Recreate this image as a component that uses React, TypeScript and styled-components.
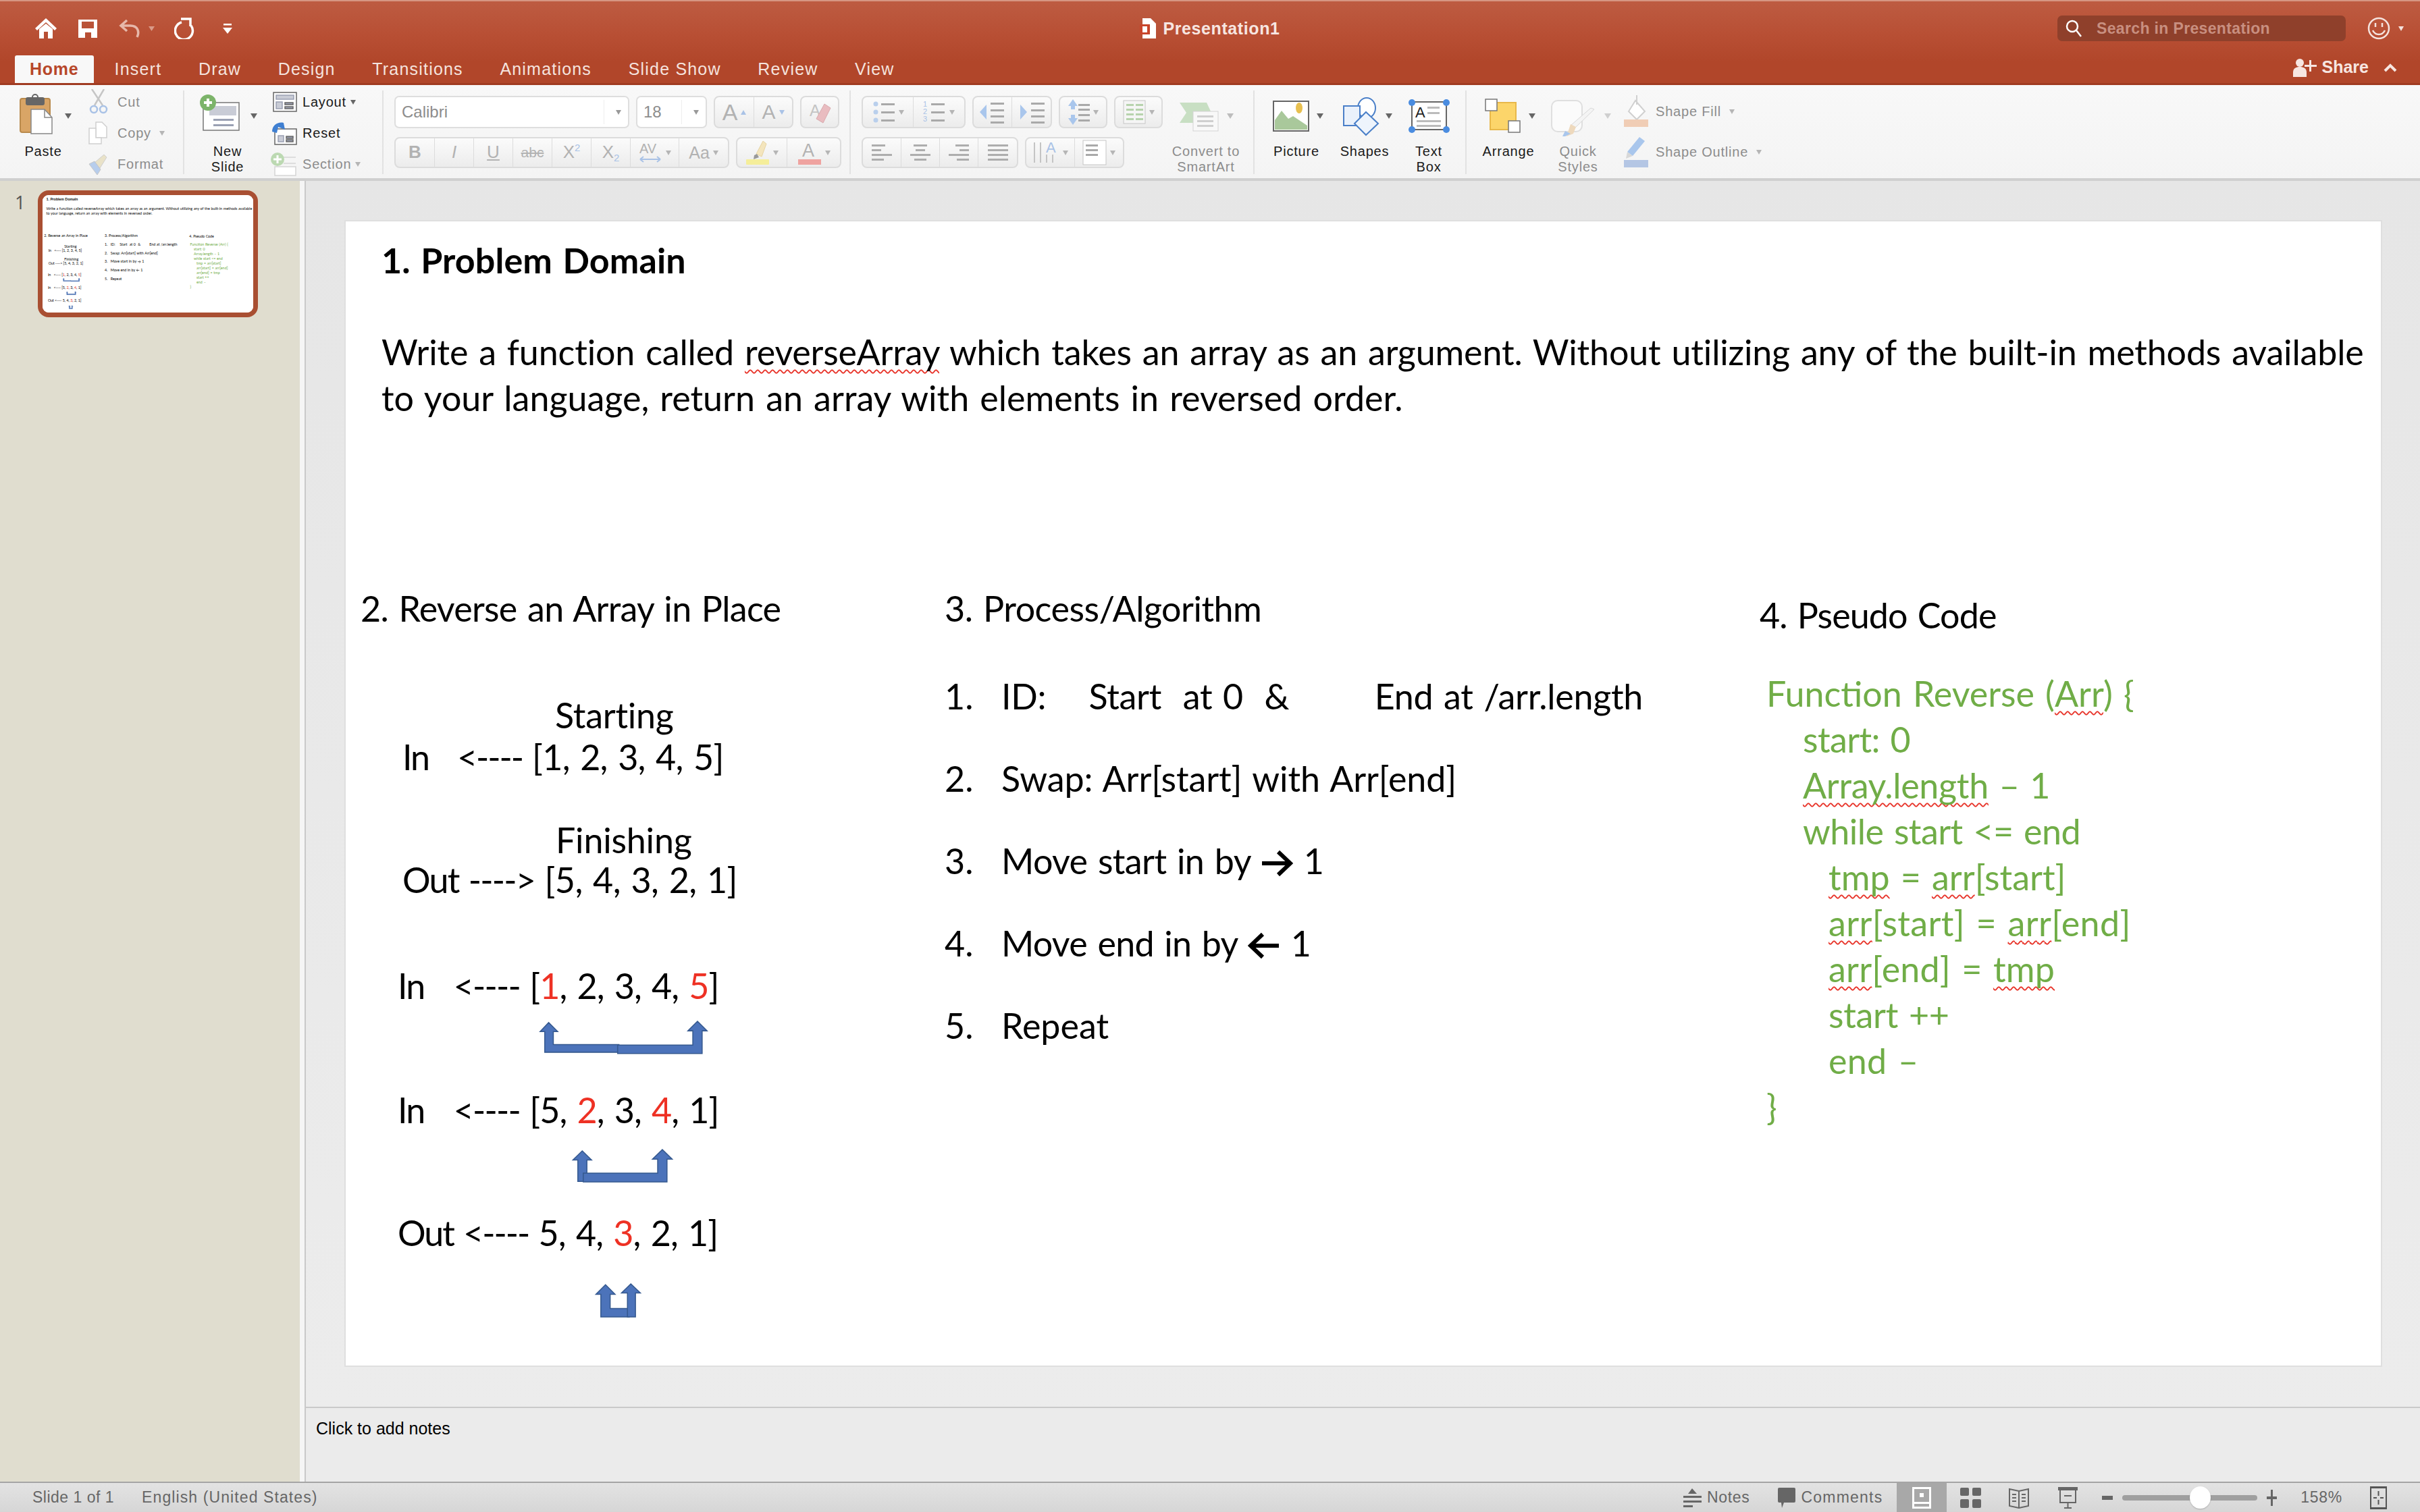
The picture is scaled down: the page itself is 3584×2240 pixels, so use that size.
import React from 'react';
import styled, { createGlobalStyle } from 'styled-components';

const UI = `"Liberation Sans", Arial, sans-serif`;

const Global = createGlobalStyle`
  html, body { margin: 0; padding: 0; background: #ebebeb; }
  * { box-sizing: border-box; }
`;

const Page = styled.div`
  width: 3584px;
  height: 2240px;
  display: flex;
  flex-direction: column;
  overflow: hidden;
  font-family: ${UI};
`;

/* ---------- title bar ---------- */

const TitleBar = styled.header`
  height: 126px;
  flex-shrink: 0;
  background: linear-gradient(#bd5b41 2px, #b84f34 50px, #b1462a 90px, #b1462a);
  border-top: 2px solid #d69683;
  border-bottom: 3px solid #a03b21;
`;

const TopRow = styled.div`
  height: 80px;
  display: grid;
  grid-template-columns: 1fr auto 1fr;
  align-items: center;
`;

const QuickAccess = styled.div`
  display: flex;
  align-items: center;
  padding-left: 52px;
  gap: 32px;
`;

const DocTitle = styled.div`
  display: flex;
  align-items: center;
  gap: 10px;
  color: #f7e6e1;
  font-size: 25px;
  font-weight: 700;
  letter-spacing: 0.6px;
`;

const TopRight = styled.div`
  display: flex;
  align-items: center;
  justify-content: flex-end;
  padding-right: 24px;
`;

const SearchBox = styled.div`
  width: 427px;
  height: 38px;
  border-radius: 7px;
  background: #8f402b;
  display: flex;
  align-items: center;
  padding-left: 12px;
  gap: 22px;
  color: #c88f80;
  font-size: 23px;
  font-weight: 700;
  letter-spacing: 0.35px;
  margin-right: 32px;
`;

const TabRow = styled.div`
  height: 41px;
  display: flex;
  align-items: stretch;
`;

const Tab = styled.div<{ $active?: boolean }>`
  display: flex;
  align-items: center;
  padding: 0 27.3px;
  font-size: 25px;
  letter-spacing: 1.2px;
  color: #f5e3de;
  ${(p) =>
    p.$active &&
    `
    margin: 0 3px 0 22px;
    padding: 0 23px 0 22px;
    background: #f8f8f8;
    color: #b7472a;
    font-weight: 700;
    letter-spacing: 0.7px;
    border-radius: 3px 3px 0 0;
  `}
`;

const ShareArea = styled.div`
  margin-left: auto;
  display: flex;
  align-items: center;
  gap: 8px;
  padding: 0 34px 6px 0;
  color: #f7e6e1;
  font-size: 25px;
  font-weight: 700;
`;

/* ---------- ribbon ---------- */

const Ribbon = styled.section`
  height: 142px;
  flex-shrink: 0;
  display: flex;
  background: linear-gradient(#f8f8f8, #f4f4f4);
  border-bottom: 4px solid #cfcfcf;
`;

const Group = styled.div<{ $w?: number; $pad: number }>`
  width: ${(p) => (p.$w ? `${p.$w}px` : 'auto')};
  flex-shrink: 0;
  display: flex;
  align-items: flex-start;
  padding-left: ${(p) => p.$pad}px;
`;

const Sep = styled.div`
  width: 2px;
  height: 124px;
  margin-top: 8px;
  flex-shrink: 0;
  background: #e2e2e2;
`;

const BigCol = styled.div<{ $w: number; $ml?: number; $off?: boolean }>`
  width: ${(p) => p.$w}px;
  margin-left: ${(p) => p.$ml ?? 0}px;
  flex-shrink: 0;
  padding-top: 12px;
  display: flex;
  flex-direction: column;
  font-size: 20px;
  letter-spacing: 0.8px;
  color: ${(p) => (p.$off ? '#8c8c8c' : '#1a1a1a')};
`;

const BigLabel = styled.div`
  margin-top: 11px;
  line-height: 23px;
  text-align: center;
  white-space: nowrap;
`;

const SmallList = styled.div<{ $ml: number; $top?: number }>`
  margin-left: ${(p) => p.$ml}px;
  display: flex;
  flex-direction: column;
  padding-top: ${(p) => p.$top ?? 2}px;
  flex-shrink: 0;
`;

const SmallRow = styled.div<{ $h: number; $gap: number; $off?: boolean }>`
  height: ${(p) => p.$h}px;
  display: flex;
  align-items: center;
  gap: ${(p) => p.$gap}px;
  font-size: 20px;
  letter-spacing: 0.8px;
  white-space: nowrap;
  color: ${(p) => (p.$off ? '#8c8c8c' : '#1a1a1a')};
`;

const Caret = styled.span<{ $c?: string; $ml?: number; $up?: boolean }>`
  display: inline-block;
  width: 0;
  height: 0;
  margin-left: ${(p) => p.$ml ?? 0}px;
  border-left: 4px solid transparent;
  border-right: 4px solid transparent;
  border-top: 7px solid ${(p) => p.$c ?? '#b5b5b5'};
  transform: ${(p) => (p.$up ? 'rotate(180deg)' : 'none')};
  flex-shrink: 0;
`;

const Stack = styled.div`
  padding-top: 16px;
  display: flex;
  flex-direction: column;
  gap: 13px;
`;

const ToolRow = styled.div<{ $h: number }>`
  height: ${(p) => p.$h}px;
  display: flex;
  gap: 10px;
`;

const SelectBox = styled.div<{ $w: number }>`
  width: ${(p) => p.$w}px;
  background: #fff;
  border: 2px solid #dedede;
  border-radius: 7px;
  display: flex;
  align-items: center;
  padding: 0 10px 0 9px;
  font-size: 24px;
  color: #8d8d8d;
`;

const SelectArrow = styled.div`
  margin-left: auto;
  height: 36px;
  width: 26px;
  border-left: 1px solid #eee;
  display: flex;
  align-items: center;
  justify-content: flex-end;
`;

const BtnGroup = styled.div`
  display: flex;
  background: linear-gradient(#fbfbfb, #ececec);
  border: 2px solid #dcdcdc;
  border-radius: 8px;
  overflow: hidden;
`;

const Cell = styled.div<{ $w: number }>`
  width: ${(p) => p.$w}px;
  display: flex;
  align-items: center;
  justify-content: center;
  gap: 5px;
  border-right: 1px solid #dcdcdc;
  &:last-child { border-right: 0; }
`;

const Glyph = styled.span<{ $size?: number; $bold?: boolean; $italic?: boolean; $deco?: string }>`
  font-size: ${(p) => p.$size ?? 26}px;
  font-weight: ${(p) => (p.$bold ? 700 : 400)};
  font-style: ${(p) => (p.$italic ? 'italic' : 'normal')};
  text-decoration: ${(p) => p.$deco ?? 'none'};
  color: #b2b2b2;
  line-height: 1.2;
`;

const SubMark = styled.span<{ $up?: boolean }>`
  font-size: 15px;
  color: #a9c2e6;
  vertical-align: ${(p) => (p.$up ? '10px' : '-5px')};
`;

/* ---------- work area ---------- */

const Work = styled.main`
  flex: 1;
  min-height: 0;
  display: flex;
`;

const Sidebar = styled.aside`
  width: 444px;
  flex-shrink: 0;
  background: #e0ddcf;
  display: flex;
  align-items: flex-start;
  padding: 14px 0 0 22px;
`;

const SlideNo = styled.div`
  width: 34px;
  font-family: "Open Sans", sans-serif;
  font-size: 27px;
  line-height: 36px;
  color: #555;
`;

const Thumb = styled.div`
  width: 326px;
  height: 188px;
  border: 7px solid #a94f32;
  border-radius: 16px;
  background: #fff;
  overflow: hidden;
`;

const Splitter = styled.div`
  width: 9px;
  flex-shrink: 0;
  background: #f5f5f5;
  border-right: 2px solid #c9c9c9;
`;

const MainCol = styled.div`
  flex: 1;
  min-width: 0;
  display: flex;
  flex-direction: column;
`;

const Canvas = styled.div`
  flex: 1;
  min-height: 0;
  background: linear-gradient(#e6e6e6, #ececec);
  padding: 60px 0 0 59px;
`;

const Notes = styled.div`
  height: 111px;
  flex-shrink: 0;
  background: #ebebeb;
  border-top: 2px solid #c9c9c9;
  padding: 16px 0 0 15px;
  font-size: 25px;
  line-height: 28px;
  color: #000;
`;

/* ---------- slide ---------- */

const Spell = styled.span`
  text-decoration: underline wavy #e8352b 1.5px;
  text-underline-offset: 6px;
  text-decoration-skip-ink: none;
`;

const SlideFrame = styled.div`
  position: relative;
  width: 3014px;
  height: 1695px;
  background: #fff;
  box-shadow: 0 0 0 2px #dfdfdf;
  font-family: Lato, "Open Sans", sans-serif;
  font-size: 52px;
  line-height: 68px;
  word-spacing: 2.8px;
  color: #000;
`;

const ThumbScale = styled.div`
  width: 3014px;
  height: 1695px;
  transform: scale(0.1038);
  transform-origin: 0 0;
  ${Spell} { text-decoration: none; }
  ${SlideFrame} { box-shadow: none; }
`;

const TextBox = styled.div<{ $x: number; $y: number; $c?: string; $ls?: number }>`
  position: absolute;
  left: ${(p) => p.$x}px;
  top: ${(p) => p.$y}px;
  white-space: pre;
  color: ${(p) => p.$c ?? 'inherit'};
  letter-spacing: ${(p) => p.$ls ?? 0}px;
`;

const Line = styled.div<{ $n?: number; $ls?: number }>`
  padding-left: ${(p) => p.$n ?? 0}px;
  letter-spacing: ${(p) => p.$ls ?? 0}px;
`;

const Heading = styled(Line)`
  font-weight: 700;
`;

const Blank = styled.div`
  height: 68px;
`;

// digits run wider in Lato than in Calibri, so the array part gets its own tracking
const ArrayPart = styled.span<{ $ls: number }>`
  letter-spacing: ${(p) => p.$ls}px;
`;

const AlgoRow = styled.div<{ $ls?: number }>`
  display: flex;
  height: 68px;
  margin-bottom: 54px;
  letter-spacing: ${(p) => p.$ls ?? 0}px;
`;

const AlgoNo = styled.span`
  width: 84px;
  flex-shrink: 0;
  letter-spacing: 0;
`;

const Red = styled.span`
  color: #ee3124;
`;

const InlineArrow = styled.svg`
  display: inline-block;
  vertical-align: -4px;
  margin: 0 16px 0 14px;
`;

const Arrows = styled.svg`
  position: absolute;
  left: 48px;
  top: 1074px;
`;

/* ---------- status bar ---------- */

const StatusBar = styled.footer`
  height: 45px;
  flex-shrink: 0;
  display: flex;
  align-items: center;
  background: linear-gradient(#e3e3e3, #d6d6d6);
  border-top: 2px solid #a5a5a5;
  padding: 0 49px 0 48px;
  font-size: 23px;
  color: #666;
`;

const StatusText = styled.span<{ $ml?: number; $ls?: number }>`
  margin-left: ${(p) => p.$ml ?? 0}px;
  letter-spacing: ${(p) => p.$ls ?? 0.7}px;
  white-space: nowrap;
`;

const Push = styled.div`
  margin-left: auto;
`;

const ViewTile = styled.div`
  width: 74px;
  height: 43px;
  margin-left: 21px;
  background: #a8a8a8;
  display: flex;
  align-items: center;
  justify-content: center;
`;

const Icon = styled.svg<{ $ml?: number }>`
  display: block;
  flex-shrink: 0;
  margin-left: ${(p) => p.$ml ?? 0}px;
`;

const ZoomTrack = styled.div`
  position: relative;
  width: 200px;
  height: 8px;
  margin-left: 14px;
  border-radius: 4px;
  background: #9f9f9f;
`;

const ZoomThumb = styled.div`
  position: absolute;
  left: 100px;
  top: -13px;
  width: 31px;
  height: 33px;
  border-radius: 50%;
  background: #fff;
  box-shadow: 0 1px 2px rgba(0, 0, 0, 0.2);
`;

/* ---------- icons ---------- */

const CaretMark = ({ x, y, c = '#666' }: { x: number; y: number; c?: string }) => (
  <polygon points={`${x},${y} ${x + 10},${y} ${x + 5},${y + 8}`} fill={c} />
);

const ParaLines = ({ x, ys, w, c = '#a9a9a9' }: { x: number; ys: number[]; w: number; c?: string }) => (
  <>
    {ys.map((y) => (
      <rect key={y} x={x} y={y} width={w} height={3} fill={c} />
    ))}
  </>
);

function SlideContent() {
  return (
    <SlideFrame>
      <TextBox $x={53} $y={23}>
        <Heading $ls={0.1}>1. Problem Domain</Heading>
        <Blank />
        <Line $ls={-0.16}>
          Write a function called <Spell>reverseArray</Spell> which takes an array as an argument. Without utilizing any of the built-in methods available
        </Line>
        <Line>to your language, return an array with elements in reversed order.</Line>
      </TextBox>

      <TextBox $x={22} $y={539} $ls={-0.7}>2. Reverse an Array in Place</TextBox>
      <TextBox $x={887} $y={539} $ls={-0.5}>3. Process/Algorithm</TextBox>
      <TextBox $x={2094} $y={549} $ls={-0.9}>4. Pseudo Code</TextBox>

      <TextBox $x={310} $y={697} $ls={-0.25}>Starting</TextBox>
      <TextBox $x={84} $y={759} $ls={-2.1}>
        {'In   <---- '}<ArrayPart $ls={-0.7}>[1, 2, 3, 4, 5]</ArrayPart>
      </TextBox>
      <TextBox $x={311} $y={882} $ls={-0.2}>Finishing</TextBox>
      <TextBox $x={84} $y={941} $ls={-1.8}>
        {'Out ----> '}<ArrayPart $ls={-0.6}>[5, 4, 3, 2, 1]</ArrayPart>
      </TextBox>

      <TextBox $x={77} $y={1098} $ls={-1.8}>
        {'In   <---- '}
        <ArrayPart $ls={-0.95}>[<Red>1</Red>{', 2, 3, 4, '}<Red>5</Red>]</ArrayPart>
      </TextBox>
      <TextBox $x={77} $y={1282} $ls={-1.8}>
        {'In   <---- '}
        <ArrayPart $ls={-0.95}>{'[5, '}<Red>2</Red>{', 3, '}<Red>4</Red>{', 1]'}</ArrayPart>
      </TextBox>
      <TextBox $x={77} $y={1464} $ls={-2}>
        {'Out <---- '}
        <ArrayPart $ls={-0.9}>{'5, 4, '}<Red>3</Red>{', 2, 1]'}</ArrayPart>
      </TextBox>

      <Arrows width={600} height={600} viewBox="0 0 1568 1568" fill="#4c73ba" stroke="#35598f" strokeWidth={4}>
        <polygon points="660,295 695,330 678,330 678,380 932,380 932,410 645,410 645,330 627,330" />
        <polygon points="1236,290 1273,327 1254,327 1254,415 927,415 927,382 1218,382 1218,327 1199,327" />
        <polygon points="790,792 826,827 808,827 808,910 773,910 773,827 754,827" />
        <polygon points="1100,787 1138,824 1118,824 1118,912 794,912 794,878 1082,878 1082,824 1062,824" />
        <polygon points="880,1310 917,1347 898,1347 898,1402 972,1402 972,1435 862,1435 862,1347 843,1347" />
        <polygon points="978,1307 1015,1342 996,1342 996,1435 965,1435 965,1342 942,1342" />
      </Arrows>

      <TextBox $x={887} $y={669}>
        <AlgoRow $ls={-0.3}><AlgoNo>1.</AlgoNo><span>{'ID:    Start  at 0  &        End at /arr.length'}</span></AlgoRow>
        <AlgoRow $ls={-0.1}><AlgoNo>2.</AlgoNo><span>Swap: Arr[start] with Arr[end]</span></AlgoRow>
        <AlgoRow $ls={-0.6}>
          <AlgoNo>3.</AlgoNo>
          <span>
            Move start in by
            <InlineArrow width={48} height={40} viewBox="0 0 48 40" fill="none" stroke="#000" strokeWidth={6}>
              <path d="M2 20H42M26 3L44 20L26 37" />
            </InlineArrow>
            1
          </span>
        </AlgoRow>
        <AlgoRow $ls={-0.7}>
          <AlgoNo>4.</AlgoNo>
          <span>
            Move end in by
            <InlineArrow width={48} height={40} viewBox="0 0 48 40" fill="none" stroke="#000" strokeWidth={6}>
              <path d="M46 20H6M22 3L4 20L22 37" />
            </InlineArrow>
            1
          </span>
        </AlgoRow>
        <AlgoRow><AlgoNo>5.</AlgoNo><span>Repeat</span></AlgoRow>
      </TextBox>

      <TextBox $x={2104} $y={665} $c="#70ad47">
        <Line>Function Reverse (<Spell>Arr</Spell>) {'{'}</Line>
        <Line $n={54} $ls={-0.6}>start: 0</Line>
        <Line $n={54} $ls={-0.3}><Spell>Array.length</Spell> – 1</Line>
        <Line $n={54} $ls={-0.55}>{'while start <= end'}</Line>
        <Line $n={92}><Spell>tmp</Spell> = <Spell>arr</Spell>[start]</Line>
        <Line $n={92} $ls={0.35}><Spell>arr</Spell>[start] = <Spell>arr</Spell>[end]</Line>
        <Line $n={92} $ls={0.2}><Spell>arr</Spell>[end] = <Spell>tmp</Spell></Line>
        <Line $n={92} $ls={-0.3}>start ++</Line>
        <Line $n={92} $ls={0.3}>end –</Line>
        <Line>{'}'}</Line>
      </TextBox>
    </SlideFrame>
  );
}

export default function App() {
  return (
    <Page>
      <Global />
      <TitleBar>
        <TopRow>
          <QuickAccess>
            <Icon width={32} height={30} viewBox="0 0 32 30" fill="#fff">
              <path d="M16 0L32 15L29 18L16 6L3 18L0 15Z" />
              <path d="M6 16L16 8L26 16V30H19V20H13V30H6Z" />
            </Icon>
            <Icon width={28} height={28} viewBox="0 0 28 28" fill="#fff">
              <path fillRule="evenodd" d="M0 1H28V28H0ZM5 4V14H23V4ZM10 20V28H19V20Z" />
            </Icon>
            <Icon width={54} height={30} viewBox="0 0 54 30" fill="none" stroke="#e6b8aa" strokeWidth={3.5}>
              <path d="M12 3L3 11L12 19M3 11H17C28 11 31 20 27 28" />
              <polygon points="44,12 53,12 48.5,19" fill="#d99a88" stroke="none" />
            </Icon>
            <Icon width={30} height={32} viewBox="0 0 30 32" fill="none" stroke="#fff" strokeWidth={3.5} $ml={-4}>
              <path d="M11 7A13 13 0 1 0 25 12" />
              <path d="M10 2H24V13" />
            </Icon>
            <Icon width={14} height={15} viewBox="0 0 14 15" fill="#fff" $ml={10}>
              <rect x={1} y={0} width={12} height={2.5} />
              <polygon points="0,6 14,6 7,15" />
            </Icon>
          </QuickAccess>
          <DocTitle>
            <Icon width={24} height={30} viewBox="0 0 24 30">
              <path d="M4 0H16L24 8V30H4Z" fill="#fff" />
              <rect x={0} y={9} width={15} height={15} fill="#c8452b" />
              <rect x={4} y={12} width={7} height={9} fill="#fff" />
            </Icon>
            Presentation1
          </DocTitle>
          <TopRight>
            <SearchBox>
              <Icon width={24} height={26} viewBox="0 0 24 26" fill="none" stroke="#fff" strokeWidth={2.5}>
                <circle cx={10} cy={10} r={8} />
                <path d="M16 16L23 25" />
              </Icon>
              Search in Presentation
            </SearchBox>
            <Icon width={34} height={34} viewBox="0 0 34 34" fill="none" stroke="#f5e3de" strokeWidth={2.5}>
              <circle cx={17} cy={17} r={15} />
              <path d="M8 20C12 28 22 28 26 20" />
              <path d="M12 9V15M22 9V15" />
            </Icon>
            <Caret $c="#f5e3de" $ml={12} />
          </TopRight>
        </TopRow>
        <TabRow>
          <Tab $active>Home</Tab>
          <Tab>Insert</Tab>
          <Tab>Draw</Tab>
          <Tab>Design</Tab>
          <Tab>Transitions</Tab>
          <Tab>Animations</Tab>
          <Tab>Slide Show</Tab>
          <Tab>Review</Tab>
          <Tab>View</Tab>
          <ShareArea>
            <Icon width={35} height={28} viewBox="0 0 35 28" fill="#f7e6e1">
              <circle cx={10} cy={7} r={6} />
              <path d="M0 28V21C0 15 5 13 10 13C15 13 20 15 20 21V28Z" />
              <path d="M24 3H27V10H35V13H27V20H24V13H17V10H24Z" />
            </Icon>
            Share
            <Icon width={20} height={14} viewBox="0 0 20 14" fill="none" stroke="#f7e6e1" strokeWidth={4} $ml={14}>
              <path d="M2 12L10 4L18 12" />
            </Icon>
          </ShareArea>
        </TabRow>
      </TitleBar>

      <Ribbon>
        <Group $w={271} $pad={20}>
          <BigCol $w={88}>
            <Icon width={88} height={64} viewBox="0 0 88 64">
              <rect x={10} y={8} width={44} height={50} rx={3} fill="#d9a566" stroke="#b98a4c" strokeWidth={2} />
              <rect x={18} y={6} width={28} height={12} rx={3} fill="#666" />
              <circle cx={32} cy={6} r={4} fill="none" stroke="#666" strokeWidth={2} />
              <path d="M26 24H46L57 36V60H26Z" fill="#fff" stroke="#888" strokeWidth={1.5} />
              <path d="M46 24V36H57" fill="none" stroke="#888" strokeWidth={1.5} />
              <CaretMark x={76} y={30} />
            </Icon>
            <BigLabel>Paste</BigLabel>
          </BigCol>
          <SmallList $ml={22}>
            <SmallRow $h={46} $gap={8} $off>
              <Icon width={36} height={38} viewBox="0 0 36 38" fill="none" stroke="#c6c6c6" strokeWidth={2.5}>
                <path d="M6 0L22 24M24 0L10 24" />
                <circle cx={9} cy={30} r={5} stroke="#a9c2e6" />
                <circle cx={23} cy={30} r={5} stroke="#a9c2e6" />
              </Icon>
              Cut
            </SmallRow>
            <SmallRow $h={46} $gap={8} $off>
              <Icon width={36} height={34} viewBox="0 0 36 34" fill="#fff" stroke="#d0d0d0" strokeWidth={1.5}>
                <path d="M12 1H21L28 8V24H12Z" />
                <path d="M2 10H12V24H20V33H2Z" />
              </Icon>
              Copy
              <Caret $ml={4} />
            </SmallRow>
            <SmallRow $h={46} $gap={8} $off>
              <Icon width={36} height={32} viewBox="0 0 36 32">
                <path d="M10 14L24 2L28 6L18 22Z" fill="#e9e2c8" stroke="#cfcfcf" />
                <path d="M2 16L10 12L19 24L14 32Z" fill="#b7cdec" stroke="#c6c6c6" />
              </Icon>
              Format
            </SmallRow>
          </SmallList>
        </Group>
        <Sep />
        <Group $w={293} $pad={19}>
          <BigCol $w={90}>
            <Icon width={90} height={64} viewBox="0 0 90 64">
              <rect x={9} y={14} width={53} height={41} fill="#fff" stroke="#777" strokeWidth={1.5} />
              <rect x={18} y={19} width={40} height={14} fill="#c9ccd6" />
              <ParaLines x={24} ys={[38, 46]} w={30} c="#9aa0b3" />
              <circle cx={16} cy={14} r={12} fill="#7cb46a" />
              <path d="M14 8H18V12H22V16H18V20H14V16H10V12H14Z" fill="#fff" />
              <CaretMark x={79} y={30} />
            </Icon>
            <BigLabel>New<br />Slide</BigLabel>
          </BigCol>
          <SmallList $ml={18}>
            <SmallRow $h={46} $gap={8}>
              <Icon width={40} height={30} viewBox="0 0 40 30" fill="#fff" stroke="#666" strokeWidth={1.5}>
                <rect x={5} y={1} width={34} height={28} />
                <rect x={9} y={5} width={26} height={6} fill="#c9ccd6" stroke="#9aa0b3" />
                <rect x={9} y={15} width={9} height={10} fill="#c9ccd6" stroke="#9aa0b3" />
                <ParaLines x={22} ys={[16, 22]} w={12} c="#9aa0b3" />
              </Icon>
              Layout
              <Caret $c="#666" $ml={-2} />
            </SmallRow>
            <SmallRow $h={46} $gap={8}>
              <Icon width={40} height={36} viewBox="0 0 40 36" fill="#fff" stroke="#666" strokeWidth={1.5}>
                <rect x={7} y={12} width={32} height={23} />
                <rect x={12} y={22} width={8} height={9} fill="#c9ccd6" stroke="#9aa0b3" />
                <ParaLines x={24} ys={[23, 28]} w={10} c="#9aa0b3" />
                <path d="M3 16C3 6 12 1 20 3L22 13L12 9L10 18Z" fill="#3f7fd1" stroke="none" />
              </Icon>
              Reset
            </SmallRow>
            <SmallRow $h={46} $gap={8} $off>
              <Icon width={40} height={36} viewBox="0 0 40 36" fill="none" stroke="#d5d5d5" strokeWidth={1.5}>
                <rect x={7} y={22} width={31} height={13} fill="#fff" />
                <path d="M20 8H38M20 17H38" />
                <circle cx={11} cy={11} r={10} fill="#bcd9b2" stroke="none" />
                <path d="M9.5 5H12.5V9.5H17V12.5H12.5V17H9.5V12.5H5V9.5H9.5Z" fill="#fff" stroke="none" />
              </Icon>
              Section
              <Caret $ml={-2} />
            </SmallRow>
          </SmallList>
        </Group>
        <Sep />
        <Group $w={690} $pad={16}>
          <Stack>
            <ToolRow $h={48}>
              <SelectBox $w={348}>Calibri<SelectArrow><Caret $c="#999" /></SelectArrow></SelectBox>
              <SelectBox $w={105}>18<SelectArrow><Caret $c="#999" /></SelectArrow></SelectBox>
              <BtnGroup>
                <Cell $w={58}><Glyph $size={34}>A</Glyph><Caret $c="#a9c2e6" $up /></Cell>
                <Cell $w={56}><Glyph $size={30}>A</Glyph><Caret $c="#a9c2e6" /></Cell>
              </BtnGroup>
              <BtnGroup>
                <Cell $w={54}>
                  <Icon width={34} height={40} viewBox="0 0 34 40">
                    <text x={2} y={26} fontSize={24} fill="#c4c4c4" fontFamily={UI}>A</text>
                    <path d="M24 8L33 14L22 36L12 30Z" fill="#e9bcc0" stroke="#d9a9ad" />
                  </Icon>
                </Cell>
              </BtnGroup>
            </ToolRow>
            <ToolRow $h={46}>
              <BtnGroup>
                <Cell $w={58}><Glyph $bold>B</Glyph></Cell>
                <Cell $w={58}><Glyph $italic>I</Glyph></Cell>
                <Cell $w={58}><Glyph $deco="underline">U</Glyph></Cell>
                <Cell $w={58}><Glyph $size={21} $deco="line-through">abc</Glyph></Cell>
                <Cell $w={58}><Glyph>X<SubMark $up>2</SubMark></Glyph></Cell>
                <Cell $w={58}><Glyph>X<SubMark>2</SubMark></Glyph></Cell>
                <Cell $w={72}>
                  <Icon width={36} height={36} viewBox="0 0 36 36">
                    <text x={2} y={19} fontSize={20} fill="#b2b2b2" fontFamily={UI}>AV</text>
                    <path d="M3 28H33M3 28L8 24M3 28L8 32M33 28L28 24M33 28L28 32" stroke="#a9c2e6" strokeWidth={2} fill="none" />
                  </Icon>
                  <Caret />
                </Cell>
                <Cell $w={72}><Glyph $size={25}>Aa</Glyph><Caret /></Cell>
              </BtnGroup>
              <BtnGroup>
                <Cell $w={74}>
                  <Icon width={36} height={36} viewBox="0 0 36 36">
                    <path d="M16 20L26 1L31 5L24 24Z" fill="#f4e5bd" stroke="#e6d4a2" />
                    <path d="M13 22L17 20L20 25L12 28Z" fill="#999" />
                    <rect x={1} y={28} width={34} height={8} rx={1} fill="#f5ee9a" />
                  </Icon>
                  <Caret />
                </Cell>
                <Cell $w={78}>
                  <Icon width={36} height={36} viewBox="0 0 36 36">
                    <text x={7} y={24} fontSize={27} fill="#b2b2b2" fontFamily={UI}>A</text>
                    <rect x={1} y={28} width={34} height={8} fill="#efa3a0" />
                  </Icon>
                  <Caret />
                </Cell>
              </BtnGroup>
            </ToolRow>
          </Stack>
        </Group>
        <Sep />
        <Group $w={596} $pad={16}>
          <Stack>
            <ToolRow $h={48}>
              <BtnGroup>
                <Cell $w={75}>
                  <Icon width={34} height={36} viewBox="0 0 34 36" fill="#b9cfec">
                    <circle cx={5} cy={6} r={3.5} /><circle cx={5} cy={18} r={3.5} /><circle cx={5} cy={30} r={3.5} />
                    <ParaLines x={13} ys={[5, 17, 29]} w={20} />
                  </Icon>
                  <Caret />
                </Cell>
                <Cell $w={75}>
                  <Icon width={34} height={36} viewBox="0 0 34 36">
                    <text x={0} y={10} fontSize={11} fill="#a9c2e6" fontFamily={UI}>1</text>
                    <text x={0} y={21} fontSize={11} fill="#a9c2e6" fontFamily={UI}>2</text>
                    <text x={0} y={32} fontSize={11} fill="#a9c2e6" fontFamily={UI}>3</text>
                    <ParaLines x={12} ys={[5, 17, 29]} w={20} />
                  </Icon>
                  <Caret />
                </Cell>
              </BtnGroup>
              <BtnGroup>
                <Cell $w={57}>
                  <Icon width={38} height={34} viewBox="0 0 38 34">
                    <polygon points="0,17 10,6 10,28" fill="#a9c6ec" />
                    <ParaLines x={16} ys={[3, 13, 22, 31]} w={20} />
                  </Icon>
                </Cell>
                <Cell $w={57}>
                  <Icon width={38} height={34} viewBox="0 0 38 34">
                    <polygon points="12,17 2,6 2,28" fill="#a9c6ec" />
                    <ParaLines x={18} ys={[3, 13, 22, 31]} w={20} />
                  </Icon>
                </Cell>
              </BtnGroup>
              <BtnGroup>
                <Cell $w={68}>
                  <Icon width={32} height={38} viewBox="0 0 32 38">
                    <path d="M7 0L14 10H10V15H4V10H0ZM7 38L14 28H10V23H4V28H0Z" fill="#a9c6ec" />
                    <ParaLines x={15} ys={[7, 14, 22, 30]} w={17} />
                  </Icon>
                  <Caret />
                </Cell>
              </BtnGroup>
              <BtnGroup>
                <Cell $w={68}>
                  <Icon width={34} height={36} viewBox="0 0 34 36">
                    <rect x={1} y={1} width={32} height={34} fill="#f5f5f5" stroke="#c6c6c6" />
                    <ParaLines x={5} ys={[6, 13, 20, 27]} w={11} c="#b7d3ad" />
                    <ParaLines x={19} ys={[6, 13, 20, 27]} w={11} c="#b7d3ad" />
                  </Icon>
                  <Caret />
                </Cell>
              </BtnGroup>
            </ToolRow>
            <ToolRow $h={46}>
              <BtnGroup>
                {[0, 1, 2, 3].map((i) => (
                  <Cell key={i} $w={57}>
                    <Icon width={30} height={26} viewBox="0 0 30 26">
                      <rect x={i === 1 ? 5 : i === 2 ? 10 : 0} y={1} width={i === 3 ? 30 : 20} height={3} fill="#adadad" />
                      <rect x={i === 1 ? 8 : i === 2 ? 16 : 0} y={8} width={i === 3 ? 30 : 14} height={3} fill="#adadad" />
                      <rect x={0} y={15} width={30} height={3} fill="#adadad" />
                      <rect x={i === 1 ? 6 : i === 2 ? 12 : 0} y={22} width={i === 3 ? 30 : 18} height={3} fill="#adadad" />
                    </Icon>
                  </Cell>
                ))}
              </BtnGroup>
              <BtnGroup>
                <Cell $w={72}>
                  <Icon width={40} height={38} viewBox="0 0 40 38">
                    <path d="M3 4V34M12 4V34M21 22V34M30 22V34" stroke="#c4c4c4" strokeWidth={2} />
                    <text x={20} y={19} fontSize={22} fill="#a9c2e6" fontFamily={UI}>A</text>
                  </Icon>
                  <Caret />
                </Cell>
                <Cell $w={71}>
                  <Icon width={36} height={38} viewBox="0 0 36 38">
                    <rect x={1} y={1} width={34} height={36} fill="#fff" stroke="#c6c6c6" />
                    <ParaLines x={5} ys={[7, 14, 21]} w={18} />
                  </Icon>
                  <Caret />
                </Cell>
              </BtnGroup>
            </ToolRow>
          </Stack>
          <BigCol $w={110} $ml={9} $off>
            <Icon width={110} height={64} viewBox="0 0 110 64">
              <polygon points="16,14 56,14 70,44 58,44 30,44 16,44 26,29" fill="#c8dfc3" />
              <rect x={36} y={27} width={37} height={29} fill="#f8f8f8" stroke="#d4d4d4" />
              <ParaLines x={42} ys={[33, 40, 47]} w={24} c="#cfcfcf" />
              <CaretMark x={86} y={30} c="#bdbdbd" />
            </Icon>
            <BigLabel>Convert to<br />SmartArt</BigLabel>
          </BigCol>
        </Group>
        <Sep />
        <Group $w={312} $pad={14}>
          <BigCol $w={96}>
            <Icon width={96} height={64} viewBox="0 0 96 64">
              <rect x={14} y={12} width={52} height={44} fill="#fff" stroke="#666" strokeWidth={2} />
              <path d="M16 54V40L26 26L36 38L43 34L64 48V54Z" fill="#a9c89b" />
              <ellipse cx={52} cy={22} rx={5} ry={8} fill="#e8c050" />
              <CaretMark x={78} y={30} />
            </Icon>
            <BigLabel>Picture</BigLabel>
          </BigCol>
          <BigCol $w={98} $ml={4}>
            <Icon width={98} height={64} viewBox="0 0 98 64" fill="#fff" stroke="#4a7fc8" strokeWidth={2}>
              <ellipse cx={52} cy={22} rx={13} ry={15} />
              <rect x={18} y={19} width={24} height={29} fill="#eaf1fb" />
              <polygon points="51,28 69,45 51,62 34,45" fill="#eef4fc" />
              <polygon points="80,30 90,30 85,38" fill="#666" stroke="none" />
            </Icon>
            <BigLabel>Shapes</BigLabel>
          </BigCol>
          <BigCol $w={84} $ml={4}>
            <Icon width={84} height={64} viewBox="0 0 84 64">
              <rect x={17} y={13} width={51} height={41} fill="#fff" stroke="#666" strokeWidth={2} />
              <text x={22} y={36} fontSize={22} fill="#222" fontFamily={UI}>A</text>
              <ParaLines x={40} ys={[20, 28]} w={18} c="#bbb" />
              <ParaLines x={24} ys={[40, 47]} w={36} c="#bbb" />
              <circle cx={17} cy={14} r={5} fill="#4a8ce0" /><circle cx={68} cy={14} r={5} fill="#4a8ce0" />
              <circle cx={17} cy={54} r={5} fill="#4a8ce0" /><circle cx={68} cy={54} r={5} fill="#4a8ce0" />
            </Icon>
            <BigLabel>Text<br />Box</BigLabel>
          </BigCol>
        </Group>
        <Sep />
        <Group $pad={18}>
          <BigCol $w={88}>
            <Icon width={88} height={64} viewBox="0 0 88 64">
              <rect x={17} y={14} width={38} height={40} fill="#fcd56a" stroke="#e8b84a" strokeWidth={2} />
              <rect x={10} y={9} width={17} height={17} fill="#fff" stroke="#777" strokeWidth={1.5} />
              <rect x={44} y={41} width={17} height={17} fill="#fff" stroke="#777" strokeWidth={1.5} />
              <CaretMark x={74} y={30} />
            </Icon>
            <BigLabel>Arrange</BigLabel>
          </BigCol>
          <BigCol $w={98} $ml={10} $off>
            <Icon width={98} height={64} viewBox="0 0 98 64">
              <rect x={10} y={11} width={45} height={46} rx={9} fill="#fbfbfb" stroke="#dfdfdf" strokeWidth={2} />
              <path d="M68 22L73 24L44 52L38 48Z" fill="#f4f4f4" stroke="#d8d8d8" />
              <path d="M38 46L46 50L42 60L32 64Z" fill="#eed9bd" />
              <path d="M30 56L38 60L30 64L26 64Z" fill="#a9c6ec" />
              <CaretMark x={88} y={30} c="#cfcfcf" />
            </Icon>
            <BigLabel>Quick<br />Styles</BigLabel>
          </BigCol>
          <SmallList $ml={18} $top={9}>
            <SmallRow $h={60} $gap={10} $off>
              <Icon width={38} height={48} viewBox="0 0 38 48">
                <path d="M18 8L32 24L20 36L8 24Z" fill="#fff" stroke="#d0d0d0" strokeWidth={2} />
                <path d="M20 0V14" stroke="#d0d0d0" strokeWidth={2} />
                <rect x={1} y={36} width={36} height={11} fill="#f0cdb5" />
              </Icon>
              Shape Fill
              <Caret $ml={2} />
            </SmallRow>
            <SmallRow $h={60} $gap={10} $off>
              <Icon width={38} height={48} viewBox="0 0 38 48">
                <path d="M24 2L32 8L14 30L6 24Z" fill="#a9c6ec" />
                <path d="M6 24L14 30L4 34Z" fill="#d8d8d8" />
                <rect x={1} y={36} width={36} height={11} fill="#b4c6e4" />
              </Icon>
              Shape Outline
              <Caret $ml={2} />
            </SmallRow>
          </SmallList>
        </Group>
      </Ribbon>

      <Work>
        <Sidebar>
          <SlideNo>1</SlideNo>
          <Thumb>
            <ThumbScale>
              <SlideContent />
            </ThumbScale>
          </Thumb>
        </Sidebar>
        <Splitter />
        <MainCol>
          <Canvas>
            <SlideContent />
          </Canvas>
          <Notes>Click to add notes</Notes>
        </MainCol>
      </Work>

      <StatusBar>
        <StatusText $ls={0.5}>Slide 1 of 1</StatusText>
        <StatusText $ml={41} $ls={1.1}>English (United States)</StatusText>
        <Push />
        <Icon width={27} height={28} viewBox="0 0 27 28" fill="#666">
          <polygon points="13,0 20,8 7,8" />
          <rect x={0} y={11} width={27} height={3} /><rect x={0} y={18} width={27} height={3} /><rect x={0} y={25} width={14} height={3} />
        </Icon>
        <StatusText $ml={8}>Notes</StatusText>
        <Icon width={26} height={30} viewBox="0 0 26 30" fill="#666" $ml={41}>
          <path d="M2 0H24Q26 0 26 2V20Q26 22 24 22H9L6 30L5 22H2Q0 22 0 20V2Q0 0 2 0Z" />
        </Icon>
        <StatusText $ml={9} $ls={1.2}>Comments</StatusText>
        <ViewTile>
          <Icon width={28} height={32} viewBox="0 0 28 32" fill="#fff">
            <path fillRule="evenodd" d="M0 0H28V32H0ZM3 3V22H25V3ZM3 25V29H25V25Z" />
            <rect x={11} y={9} width={6} height={6} />
          </Icon>
        </ViewTile>
        <Icon width={31} height={30} viewBox="0 0 31 30" fill="#666" $ml={20}>
          <rect x={0} y={0} width={13} height={12} rx={2} /><rect x={18} y={0} width={13} height={12} rx={2} />
          <rect x={0} y={17} width={13} height={13} rx={2} /><rect x={18} y={17} width={13} height={13} rx={2} />
        </Icon>
        <Icon width={30} height={32} viewBox="0 0 30 32" fill="none" stroke="#666" strokeWidth={2} $ml={41}>
          <path d="M1 3L15 6L29 3V28L15 31L1 28ZM15 6V31" />
          <path d="M5 11H11M5 16H11M5 21H11M19 11H25M19 16H25M19 21H25" />
        </Icon>
        <Icon width={29} height={32} viewBox="0 0 29 32" fill="none" stroke="#666" strokeWidth={2} $ml={43}>
          <rect x={0} y={0} width={29} height={5} fill="#666" stroke="none" />
          <rect x={3} y={4} width={23} height={19} />
          <path d="M9 13H20M14.5 23V30M9 31H20" />
        </Icon>
        <Icon width={16} height={6} viewBox="0 0 16 6" fill="#666" $ml={36}>
          <rect width={16} height={6} />
        </Icon>
        <ZoomTrack><ZoomThumb /></ZoomTrack>
        <Icon width={15} height={24} viewBox="0 0 15 24" fill="#666" $ml={14}>
          <path d="M6 0H9V10H15V14H9V24H6V14H0V10H6Z" />
        </Icon>
        <StatusText $ml={35}>158%</StatusText>
        <Icon width={25} height={34} viewBox="0 0 25 34" fill="none" stroke="#555" strokeWidth={2} $ml={41}>
          <rect x={1} y={2} width={23} height={30} />
          <rect x={0} y={0} width={25} height={3} fill="#555" stroke="none" />
          <rect x={0} y={31} width={25} height={3} fill="#555" stroke="none" />
          <path d="M12.5 7V14M12.5 20V27M5 17H10M15 17H20" />
        </Icon>
      </StatusBar>
    </Page>
  );
}
